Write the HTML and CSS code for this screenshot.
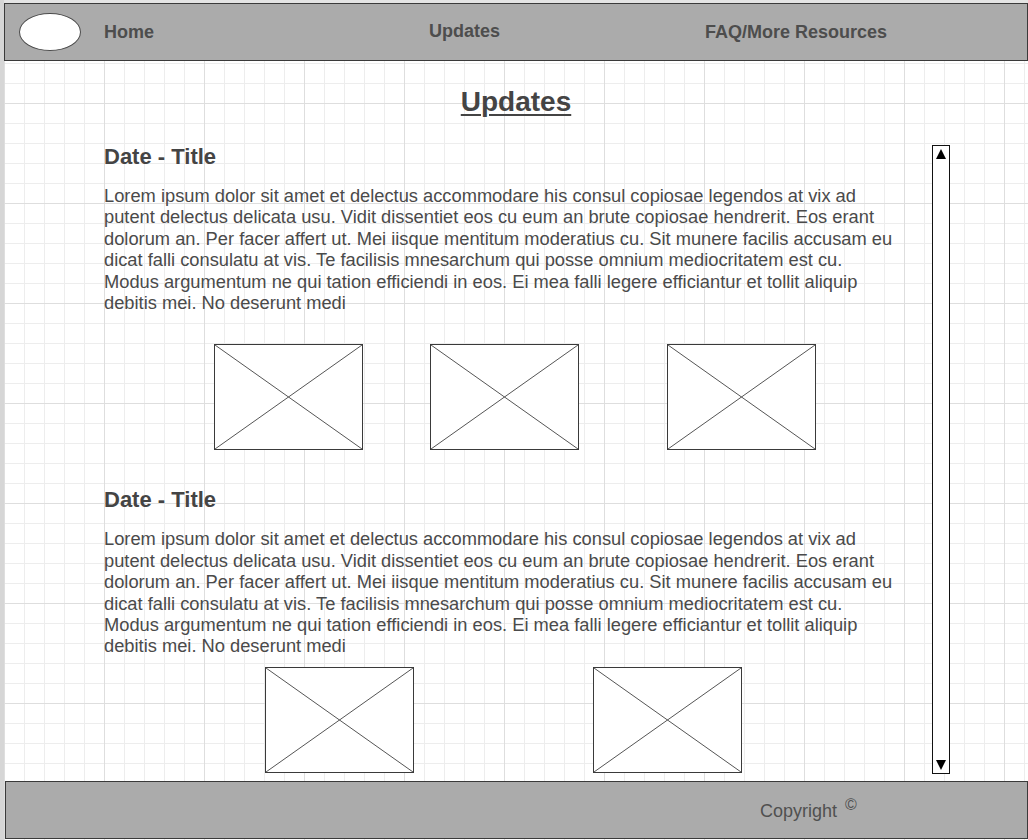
FILE: index.html
```html
<!DOCTYPE html>
<html>
  <head>
    <title>Updates</title>
    <meta name="viewport" content="width=device-width, initial-scale=1.0" />
    <link rel="stylesheet" href="styles.css">
  </head>
  <body>
    <div class="canvas">
      <header class="topbar">
        <span class="logo"></span>
        <a class="nav" href="#">Home</a>
        <a class="nav nav-mid" href="#">Updates</a>
        <a class="nav" href="#">FAQ/More Resources</a>
      </header>

      <main class="main">
        <h1>Updates</h1>
        <div class="row">
          <div class="posts">
            <section class="post">
              <h2>Date - Title</h2>
              <p>
                Lorem ipsum dolor sit amet et delectus accommodare his consul copiosae legendos at vix ad
                putent delectus delicata usu. Vidit dissentiet eos cu eum an brute copiosae hendrerit. Eos erant
                dolorum an. Per facer affert ut. Mei iisque mentitum moderatius cu. Sit munere facilis accusam eu
                dicat falli consulatu at vis. Te facilisis mnesarchum qui posse omnium mediocritatem est cu.
                Modus argumentum ne qui tation efficiendi in eos. Ei mea falli legere efficiantur et tollit aliquip
                debitis mei. No deserunt medi
              </p>
              <div class="shots shots-three">
                <svg class="shot" width="149" height="106" viewBox="0 0 149 106"><rect x="0.5" y="0.5" width="148" height="105" /><line x1="1" y1="1" x2="148" y2="105" /><line x1="148" y1="1" x2="1" y2="105" /></svg>
                <svg class="shot" width="149" height="106" viewBox="0 0 149 106"><rect x="0.5" y="0.5" width="148" height="105" /><line x1="1" y1="1" x2="148" y2="105" /><line x1="148" y1="1" x2="1" y2="105" /></svg>
                <svg class="shot" width="149" height="106" viewBox="0 0 149 106"><rect x="0.5" y="0.5" width="148" height="105" /><line x1="1" y1="1" x2="148" y2="105" /><line x1="148" y1="1" x2="1" y2="105" /></svg>
              </div>
            </section>

            <section class="post">
              <h2>Date - Title</h2>
              <p>
                Lorem ipsum dolor sit amet et delectus accommodare his consul copiosae legendos at vix ad
                putent delectus delicata usu. Vidit dissentiet eos cu eum an brute copiosae hendrerit. Eos erant
                dolorum an. Per facer affert ut. Mei iisque mentitum moderatius cu. Sit munere facilis accusam eu
                dicat falli consulatu at vis. Te facilisis mnesarchum qui posse omnium mediocritatem est cu.
                Modus argumentum ne qui tation efficiendi in eos. Ei mea falli legere efficiantur et tollit aliquip
                debitis mei. No deserunt medi
              </p>
              <div class="shots shots-two">
                <svg class="shot" width="149" height="106" viewBox="0 0 149 106"><rect x="0.5" y="0.5" width="148" height="105" /><line x1="1" y1="1" x2="148" y2="105" /><line x1="148" y1="1" x2="1" y2="105" /></svg>
                <svg class="shot" width="149" height="106" viewBox="0 0 149 106"><rect x="0.5" y="0.5" width="148" height="105" /><line x1="1" y1="1" x2="148" y2="105" /><line x1="148" y1="1" x2="1" y2="105" /></svg>
              </div>
            </section>
          </div>

          <div class="scrollbar">
            <span class="arrow arrow-up"></span>
            <span class="arrow arrow-down"></span>
          </div>
        </div>
      </main>

      <footer class="footer">
        <span class="copy">Copyright <sup>&copy;</sup></span>
      </footer>
    </div>
  </body>
</html>
```

FILE: styles.css
```css
html {
  background: #e4e4e4;
}
body {
  margin: 0;
  padding: 3px 0 0 4px;
  font-family: "Liberation Sans", Arial, sans-serif;
  color: #4a4a4a;
  height: 840px;
  box-sizing: border-box;
  overflow: hidden;
  background: linear-gradient(to right, #d6d6d6 4px, transparent 4px);
}

.canvas {
  height: 837px;
  background-color: #fff;
  background-image:
    linear-gradient(to right, #dedede 1px, transparent 1px),
    linear-gradient(to bottom, #dedede 1px, transparent 1px),
    linear-gradient(to right, #ededed 1px, transparent 1px),
    linear-gradient(to bottom, #ededed 1px, transparent 1px);
  background-size: 100px 100px, 100px 100px, 20px 20px, 20px 20px;
}

/* top bar */
.topbar {
  box-sizing: border-box;
  height: 58px;
  width: 1024px;
  border: 1px solid #3a3a3a;
  background: #ababab;
  display: grid;
  grid-template-columns: 99px 325px 276px 1fr;
  align-items: center;
}
.logo {
  display: block;
  box-sizing: border-box;
  width: 62px;
  height: 38px;
  margin-left: 14px;
  border: 1px solid #4a4a4a;
  border-radius: 50%;
  background: #fff;
}
.nav {
  font-size: 18px;
  font-weight: bold;
  color: #4d4d4d;
  text-decoration: none;
}
.nav-mid {
  margin-top: -2px;
}

/* content */
.main {
  height: 720px;
  overflow: hidden;
}
h1 {
  margin: 25px 0 27px;
  font-size: 28px;
  line-height: 32px;
  text-align: center;
  text-decoration: underline;
  text-decoration-thickness: 2px;
  text-underline-offset: 3px;
  color: #444;
}
.row {
  display: flex;
  align-items: flex-start;
}
.posts {
  width: 796px;
  margin-left: 100px;
  margin-right: 32px;
}
h2 {
  margin: 0;
  font-size: 22px;
  line-height: 24px;
  color: #444;
}
.post p {
  margin: 16px 0 0;
  font-size: 18.3px;
  line-height: 21.4px;
}
.shots {
  display: flex;
}
.shots-three {
  margin-top: 31px;
  padding-left: 110px;
  gap: 67px;
}
.shots-three .shot:last-child {
  margin-left: 21px;
}
.shots-two {
  margin-top: 10px;
  padding-left: 161px;
  gap: 179px;
}
.post + .post {
  margin-top: 38px;
}
.shot rect {
  fill: #fff;
  stroke: #3a3a3a;
  stroke-width: 1;
}
.shot line {
  stroke: #555;
  stroke-width: 1;
}

/* fake scrollbar */
.scrollbar {
  box-sizing: border-box;
  width: 18px;
  height: 629px;
  border: 1px solid #111;
  background: #fff;
  display: flex;
  flex-direction: column;
  justify-content: space-between;
  align-items: center;
  padding: 3px 0;
}
.arrow {
  width: 0;
  height: 0;
  border-left: 5.5px solid transparent;
  border-right: 5.5px solid transparent;
}
.arrow-up {
  border-bottom: 10px solid #000;
}
.arrow-down {
  border-top: 10px solid #000;
}

/* footer */
.footer {
  box-sizing: border-box;
  height: 58px;
  width: 1023px;
  margin: 0 0 0 1px;
  border: 1px solid #3a3a3a;
  background: #ababab;
  display: flex;
  align-items: center;
  padding-left: 754px;
}
.copy {
  font-size: 18px;
  color: #505050;
  margin-top: -2px;
}
.copy sup {
  font-size: 16px;
  margin-left: 3px;
}
```
